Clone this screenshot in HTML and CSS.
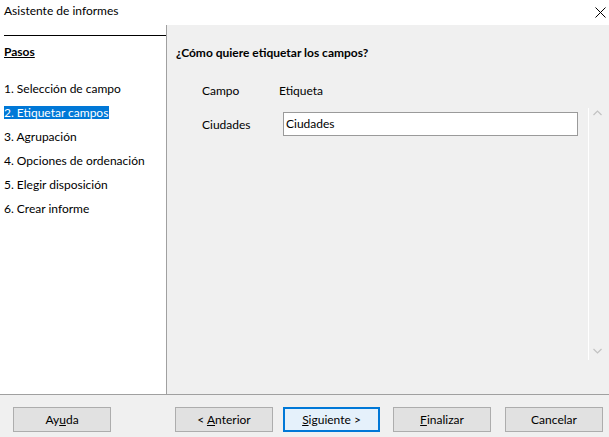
FILE: index.html
```html
<!DOCTYPE html>
<html lang="es">
<head>
<meta charset="utf-8">
<title>Asistente de informes</title>
<link rel="stylesheet" href="styles.css">
</head>
<body>
<div class="window">
  <header class="titlebar">
    <span class="title">Asistente de informes</span>
    <span class="close" aria-label="Cerrar">
      <svg width="11" height="11" viewBox="0 0 11 11"><path d="M0.5 0.5 L10.5 10.5 M10.5 0.5 L0.5 10.5" stroke="#000" stroke-width="1" fill="none"/></svg>
    </span>
  </header>
  <div class="main">
    <aside class="steps">
      <div class="steps-inner">
        <div class="steps-head">Pasos</div>
        <ul class="step-list">
          <li class="step"><span>1. Selección de campo</span></li>
          <li class="step selected"><span>2. Etiquetar campos</span></li>
          <li class="step"><span>3. Agrupación</span></li>
          <li class="step"><span>4. Opciones de ordenación</span></li>
          <li class="step"><span>5. Elegir disposición</span></li>
          <li class="step"><span>6. Crear informe</span></li>
        </ul>
      </div>
    </aside>
    <section class="content">
      <h1 class="question">¿Cómo quiere etiquetar los campos?</h1>
      <div class="field-head">
        <span class="col-field">Campo</span>
        <span class="col-label">Etiqueta</span>
      </div>
      <div class="scroll-area">
        <div class="rows">
          <div class="row">
            <span class="col-field">Ciudades</span>
            <div class="input">Ciudades</div>
          </div>
        </div>
        <div class="scrollbar">
          <svg class="arrow" width="9" height="6" viewBox="0 0 9 6"><path d="M0.5 5 L4.5 1 L8.5 5" stroke="#c2c2c2" stroke-width="1.2" fill="none"/></svg>
          <svg class="arrow" width="9" height="6" viewBox="0 0 9 6"><path d="M0.5 1 L4.5 5 L8.5 1" stroke="#c2c2c2" stroke-width="1.2" fill="none"/></svg>
        </div>
      </div>
    </section>
  </div>
  <footer class="buttons">
    <button class="btn help">Ay<u>u</u>da</button>
    <button class="btn prev">&lt; <u>A</u>nterior</button>
    <button class="btn next default"><u>S</u>iguiente &gt;</button>
    <button class="btn finish"><u>F</u>inalizar</button>
    <button class="btn cancel">Cancelar</button>
  </footer>
</div>
</body>
</html>
```
FILE: styles.css
```css
* { box-sizing: border-box; }
html, body { margin: 0; padding: 0; }
body {
  font-family: Lato, "Open Sans", "DejaVu Sans", sans-serif;
  font-size: 12px;
  color: #000;
  background: #f0f0f0;
}
.window {
  width: 609px;
  height: 437px;
  display: flex;
  flex-direction: column;
  background: #f0f0f0;
}
.titlebar {
  height: 25px;
  background: #fff;
  display: flex;
  align-items: center;
  justify-content: space-between;
  padding: 0 3px 4px 4px;
}
.title { line-height: 16px; }
.close { display: flex; width: 11px; height: 11px; margin-top: 4px; }
.main {
  height: 370px;
  display: flex;
  border-bottom: 1px solid #a0a0a0;
}
.steps {
  width: 167px;
  background: #fff;
  border-right: 1px solid #a0a0a0;
  padding-top: 10px;
}
.steps-inner { margin-left: 4px; }
.steps-head {
  border-top: 1px solid #000;
  margin-top: 0;
  padding-top: 8px;
  font-weight: bold;
  text-decoration: underline;
  line-height: 16px;
  height: 24px;
}
.step-list {
  list-style: none;
  margin: 17px 0 0 0;
  padding: 0;
}
.step {
  height: 24px;
  display: flex;
  align-items: center;
}
.step span { line-height: 13px; padding-right: 1px; }
.step.selected span { background: #0078d7; color: #fff; }
.content {
  flex: 1;
  padding: 20px 3px 0 9px;
  display: flex;
  flex-direction: column;
}
.question {
  margin: 0;
  font-size: 12px;
  font-weight: bold;
  line-height: 16px;
}
.field-head {
  margin-top: 22px;
  display: flex;
  line-height: 16px;
  padding-left: 26px;
}
.col-field { width: 77px; }
.scroll-area {
  margin-top: 9px;
  height: 252px;
  display: flex;
}
.rows { flex: 1; padding: 4px 10px 0 26px; }
.row { display: flex; align-items: center; height: 24px; }
.input {
  flex: 1;
  height: 24px;
  margin-left: 4px;
  background: #fff;
  border: 1px solid #9a9a9a;
  padding-left: 2px;
  line-height: 22px;
}
.scrollbar {
  width: 18px;
  border-left: 1px solid #fff;
  display: flex;
  flex-direction: column;
  justify-content: space-between;
  align-items: center;
  padding: 2px 0 6px 0;
}
.buttons {
  flex: 1;
  display: flex;
  align-items: flex-start;
  padding: 12px 0 0 13px;
}
.btn {
  width: 98px;
  height: 25px;
  font-family: inherit;
  font-size: 12px;
  color: #000;
  background: #e1e1e1;
  border: 1px solid #adadad;
  padding: 0;
  line-height: 16px;
}
.btn.prev { margin-left: 64px; }
.btn.next { margin-left: 10px; width: 97px; }
.btn.finish { margin-left: 13px; }
.btn.cancel { margin-left: 14px; }
.btn.default { background: #e5f1fb; border: 2px solid #0078d7; }
```
